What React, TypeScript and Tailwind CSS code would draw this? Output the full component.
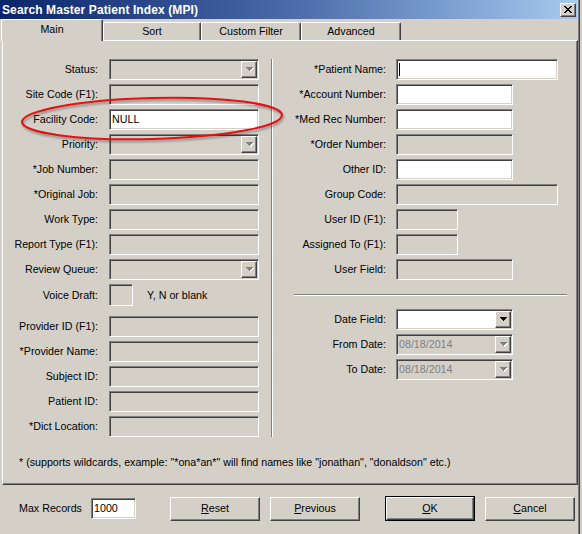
import type { ReactNode } from "react";

const SUNKEN =
  "border border-t-[#808080] border-l-[#808080] border-r-white border-b-white shadow-[inset_1px_1px_0_#404040,inset_-1px_-1px_0_#d4d0c8]";
const RAISED =
  "border border-t-white border-l-white border-r-[#404040] border-b-[#404040] shadow-[inset_-1px_-1px_0_#808080]";

const Arrow = ({ disabled }: { disabled?: boolean }) => (
  <svg width="8" height="5" viewBox="0 0 8 5" shapeRendering="crispEdges">
    {disabled && (
      <path
        d="M1 1h7v1h-1v1h-1v1h-1v1h-1v-1h-1v-1h-1v-1h-1z"
        fill="#ffffff"
      />
    )}
    <path
      d="M0 0h7v1h-1v1h-1v1h-1v1h-1v-1h-1v-1h-1v-1h-1z"
      fill={disabled ? "#808080" : "#000000"}
    />
  </svg>
);

type FieldProps = {
  className: string;
  white?: boolean;
  value?: string;
  grayText?: boolean;
  combo?: boolean;
  cursor?: boolean;
};

const Field = ({ className, white, value, grayText, combo, cursor }: FieldProps) => (
  <div
    className={`${SUNKEN} ${className} ${
      white ? "bg-white" : "bg-[#d4d0c8]"
    } p-[1px] flex items-center shrink-0`}
  >
    {cursor && <div className="ml-[1px] w-px h-[13px] bg-black" />}
    {value && (
      <span className={`pl-[1px] leading-none ${grayText ? "text-[#808080]" : "text-black"}`}>
        {value}
      </span>
    )}
    {combo && (
      <div
        className={`${RAISED} ml-auto w-[16px] h-full bg-[#d4d0c8] flex items-center justify-center pl-[1px]`}
      >
        <Arrow disabled={!white} />
      </div>
    )}
  </div>
);

const Row = ({ label, labelW, children }: { label: string; labelW: string; children: ReactNode }) => (
  <div className="flex items-center h-[21px]">
    <div className={`${labelW} text-right whitespace-nowrap text-black`}>{label}</div>
    {children}
  </div>
);

const Tab = ({ label, active, w }: { label: string; active?: boolean; w: string }) => (
  <div
    className={`${w} ${
      active ? "h-[22px] relative z-10 -mb-px pb-[2px]" : "h-[18px]"
    } bg-[#d4d0c8] border-t border-l border-t-white border-l-white border-r border-r-[#404040] shadow-[inset_-1px_0_0_#808080] rounded-tl-[2px] rounded-tr-[2px] flex items-center justify-center text-black`}
  >
    {label}
  </div>
);

const Button = ({ children, isDefault }: { children: ReactNode; isDefault?: boolean }) =>
  isDefault ? (
    <div className="w-[90px] h-[25px] border border-black shrink-0">
      <div className={`${RAISED} w-full h-full bg-[#d4d0c8] flex items-center justify-center`}>
        {children}
      </div>
    </div>
  ) : (
    <div
      className={`${RAISED} w-[90px] h-[24px] bg-[#d4d0c8] flex items-center justify-center shrink-0`}
    >
      {children}
    </div>
  );

const CloseGlyph = () => {
  const rows = ["xx....xx", ".xx..xx.", "..xxxx..", "...xx...", "..xxxx..", ".xx..xx.", "xx....xx"];
  return (
    <svg width="8" height="7" viewBox="0 0 8 7" shapeRendering="crispEdges">
      {rows.flatMap((r, y) =>
        r.split("").map((c, x) => (c === "x" ? <rect key={`${x}-${y}`} x={x} y={y} width="1" height="1" fill="#000" /> : null))
      )}
    </svg>
  );
};

const App = () => {
  const L = "w-[95px] mr-[11px]";
  const R = "w-[113px] mr-[10px]";
  return (
    <div className="relative w-[582px] h-[534px] bg-[#d4d0c8] overflow-hidden font-['Liberation_Sans',Arial,sans-serif] text-[10.7px] select-none">
      <div className="w-[580px] h-full border-r border-r-[#404040] shadow-[inset_-1px_0_0_#808080]">
        {/* title bar */}
        <div className="h-[19px] mr-[2px] bg-linear-to-r from-[#0a246a] via-[#4a6aa8] to-[#a6caf0] flex items-center pl-[2px] pr-[1px]">
          <span className="text-white font-bold text-[12px] leading-none tracking-[0.1px]">
            Search Master Patient Index (MPI)
          </span>
          <div className={`${RAISED} ml-auto w-[16px] h-[14px] bg-[#d4d0c8] flex items-center justify-center`}>
            <CloseGlyph />
          </div>
        </div>

        {/* tabs */}
        <div className="flex items-end h-[21px] pl-px">
          <Tab label="Main" active w="w-[102px]" />
          <Tab label="Sort" w="w-[98px]" />
          <Tab label="Custom Filter" w="w-[100px]" />
          <Tab label="Advanced" w="w-[100px]" />
        </div>

        {/* panel */}
        <div className="ml-[2px] w-[576px] h-[445px] border border-t-white border-l-white border-r-[#404040] border-b-[#404040] shadow-[inset_-1px_-1px_0_#808080] pt-[18px]">
          <div className="flex">
            {/* left column */}
            <div className="w-[268px] flex flex-col gap-[4px]">
              <Row label="Status:" labelW={L}><Field className="w-[150px] h-[21px]" combo /></Row>
              <Row label="Site Code (F1):" labelW={L}><Field className="w-[150px] h-[21px]" /></Row>
              <Row label="Facility Code:" labelW={L}><Field className="w-[150px] h-[21px]" white value="NULL" /></Row>
              <Row label="Priority:" labelW={L}><Field className="w-[150px] h-[21px]" combo /></Row>
              <Row label="*Job Number:" labelW={L}><Field className="w-[150px] h-[21px]" /></Row>
              <Row label="*Original Job:" labelW={L}><Field className="w-[150px] h-[21px]" /></Row>
              <Row label="Work Type:" labelW={L}><Field className="w-[150px] h-[21px]" /></Row>
              <Row label="Report Type (F1):" labelW={L}><Field className="w-[150px] h-[21px]" /></Row>
              <Row label="Review Queue:" labelW={L}><Field className="w-[150px] h-[21px]" combo /></Row>
              <div className="flex items-center h-[22px]">
                <div className={`${L} text-right text-black`}>Voice Draft:</div>
                <Field className="w-[24px] h-[22px]" />
                <span className="ml-[14px] text-black">Y, N or blank</span>
              </div>
              <div className="mt-[6px] flex flex-col gap-[4px]">
                <Row label="Provider ID (F1):" labelW={L}><Field className="w-[150px] h-[21px]" /></Row>
                <Row label="*Provider Name:" labelW={L}><Field className="w-[150px] h-[21px]" /></Row>
                <Row label="Subject ID:" labelW={L}><Field className="w-[150px] h-[21px]" /></Row>
                <Row label="Patient ID:" labelW={L}><Field className="w-[150px] h-[21px]" /></Row>
                <Row label="*Dict Location:" labelW={L}><Field className="w-[150px] h-[21px]" /></Row>
              </div>
            </div>

            {/* divider */}
            <div className="w-px bg-[#808080]" />
            <div className="w-px bg-white" />

            {/* right column */}
            <div className="flex-1 flex flex-col gap-[4px]">
              <Row label="*Patient Name:" labelW={R}><Field className="w-[162px] h-[21px]" white cursor /></Row>
              <Row label="*Account Number:" labelW={R}><Field className="w-[117px] h-[21px]" white /></Row>
              <Row label="*Med Rec Number:" labelW={R}><Field className="w-[117px] h-[21px]" white /></Row>
              <Row label="*Order Number:" labelW={R}><Field className="w-[117px] h-[21px]" /></Row>
              <Row label="Other ID:" labelW={R}><Field className="w-[117px] h-[21px]" white /></Row>
              <Row label="Group Code:" labelW={R}><Field className="w-[162px] h-[21px]" /></Row>
              <Row label="User ID (F1):" labelW={R}><Field className="w-[62px] h-[21px]" /></Row>
              <Row label="Assigned To (F1):" labelW={R}><Field className="w-[62px] h-[21px]" /></Row>
              <Row label="User Field:" labelW={R}><Field className="w-[117px] h-[21px]" /></Row>
              <div className="mt-[10px] mb-[9px] ml-[21px] w-[273px]">
                <div className="h-px bg-[#808080]" />
                <div className="h-px bg-white" />
              </div>
              <Row label="Date Field:" labelW={R}><Field className="w-[117px] h-[21px]" white combo /></Row>
              <Row label="From Date:" labelW={R}><Field className="w-[117px] h-[21px]" combo value="08/18/2014" grayText /></Row>
              <Row label="To Date:" labelW={R}><Field className="w-[117px] h-[21px]" combo value="08/18/2014" grayText /></Row>
            </div>
          </div>

          <div className="mt-[19px] pl-[16px] text-black leading-[13px] whitespace-nowrap">
            * (supports wildcards, example: "*ona*an*" will find names like "jonathan", "donaldson" etc.)
          </div>
        </div>

        {/* bottom bar */}
        <div className="flex items-center pt-[11px] pl-[19px]">
          <div className="w-[72px] text-black">Max Records</div>
          <Field className="w-[45px] h-[21px]" white value="1000" />
          <div className="ml-[34px] flex items-center">
            <Button><span><u>R</u>eset</span></Button>
            <div className="w-[10px]" />
            <Button><span><u>P</u>revious</span></Button>
            <div className="w-[25px]" />
            <Button isDefault><span><u>O</u>K</span></Button>
            <div className="w-[10px]" />
            <Button><span><u>C</u>ancel</span></Button>
          </div>
        </div>
      </div>

      {/* red annotation around Facility Code */}
      <svg
        className="absolute left-0 top-0 pointer-events-none drop-shadow-[1px_2px_1px_rgba(0,0,0,0.35)]"
        width="582"
        height="534"
        viewBox="0 0 582 534"
      >
        <ellipse
          cx="152"
          cy="118.5"
          rx="130"
          ry="20.5"
          fill="none"
          stroke="#e8100f"
          strokeWidth="2"
          transform="rotate(-1.5 152 118.5)"
        />
      </svg>
    </div>
  );
};

export default App;
